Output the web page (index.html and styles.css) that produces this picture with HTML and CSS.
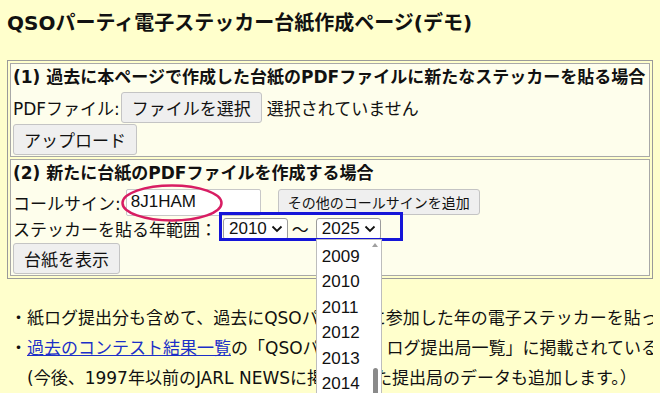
FILE: index.html
```html
<!DOCTYPE html>
<html lang="ja">
  <head>
    <meta charset="utf-8">
    <title>QSOパーティ電子ステッカー台紙作成ページ(デモ)</title>
    <link rel="stylesheet" href="styles.css">
  </head>
  <body>
    <h1 class="title">QSOパーティ電子ステッカー台紙作成ページ(デモ)</h1>

    <table class="form-table">
      <tr>
        <td>
          <div class="sec-head">(1) 過去に本ページで作成した台紙のPDFファイルに新たなステッカーを貼る場合</div>
          <div class="line line-file">
            <span>PDFファイル:</span>
            <span class="btn">ファイルを選択</span>
            <span>選択されていません</span>
          </div>
          <div class="line line-upload">
            <span class="btn">アップロード</span>
          </div>
        </td>
      </tr>
      <tr>
        <td>
          <div class="sec-head">(2) 新たに台紙のPDFファイルを作成する場合</div>
          <div class="line line-call">
            <span>コールサイン:</span>
            <span class="call-wrap">
              <span class="text-input">8J1HAM</span>
              <svg class="mark-ellipse" width="104" height="40" viewBox="0 0 104 40">
                <ellipse cx="52" cy="20" rx="49.5" ry="17.5" fill="none" stroke="#d81d63" stroke-width="2.5"/>
              </svg>
            </span>
            <span class="btn btn-small">その他のコールサインを追加</span>
          </div>
          <div class="line line-year">
            <span>ステッカーを貼る年範囲：</span>
            <span class="year-range">
              <span class="select">2010<svg class="chev" width="12" height="8" viewBox="0 0 12 8"><path d="M1.5 1.5 L6 6 L10.5 1.5" fill="none" stroke="#111" stroke-width="1.8"/></svg></span>
              <span class="tilde">～</span>
              <span class="select select-open">2025<svg class="chev" width="12" height="8" viewBox="0 0 12 8"><path d="M1.5 1.5 L6 6 L10.5 1.5" fill="none" stroke="#111" stroke-width="1.8"/></svg>
                <span class="dropdown">
                  <span class="opt">2009</span>
                  <span class="opt">2010</span>
                  <span class="opt">2011</span>
                  <span class="opt">2012</span>
                  <span class="opt">2013</span>
                  <span class="opt">2014</span>
                  <span class="scroll-up"></span>
                  <span class="scroll-thumb"></span>
                </span>
              </span>
              <span class="mark-box"></span>
            </span>
          </div>
          <div class="line line-show">
            <span class="btn">台紙を表示</span>
          </div>
        </td>
      </tr>
    </table>

    <div class="notes">
      <p>・紙ログ提出分も含めて、過去にQSOパーティに参加した年の電子ステッカーを貼った台紙を作成できます。</p>
      <p>・<a href="#">過去のコンテスト結果一覧</a>の「QSOパーティ・ログ提出局一覧」に掲載されている年のステッカーが貼られます。</p>
      <p class="indent">(今後、1997年以前のJARL NEWSに掲載された提出局のデータも追加します。）</p>
    </div>
  </body>
</html>
```

FILE: styles.css
```css
body {
    margin: 0 7px;
    background: #ffffcc;
    font-family: "DejaVu Sans", "Noto Sans CJK JP", sans-serif;
    font-size: 17px;
    color: #111;
    overflow: hidden;
}
.title {
    font-size: 20px;
    font-weight: bold;
    margin: 0;
    padding-top: 9px;
    line-height: 28px;
    height: 51px;
}
/* classic bordered table */
.form-table {
    width: 646px;
    border: 1px solid #9a9a9a;
    border-spacing: 2px;
    background: #ffffcc;
}
.form-table td {
    border: 1px solid #a8a8a8;
    background: #fefeec;
    padding: 1px 1px 1px 2px;
}
.sec-head {
    font-weight: bold;
    line-height: 25px;
}
.line {
    display: flex;
    align-items: center;
    white-space: nowrap;
}
.line-file {
    margin-top: 2px;
    gap: 1px;
}
.line-file .btn {
    margin-right: 4px;
}
.line-upload {
    margin-top: 1px;
}
.btn {
    display: inline-flex;
    align-items: center;
    height: 31px;
    box-sizing: border-box;
    padding: 0 10px;
    background: #efefef;
    border: 1px solid #c4c4c4;
    border-radius: 3px;
    font-family: "Noto Sans CJK JP", sans-serif;
    font-size: 17px;
}
.btn-small {
    height: 26px;
    font-size: 14px;
    padding: 0 9px;
    margin-left: 17px;
}
.line-call {
    margin-top: 2px;
    height: 28px;
}
.call-wrap {
    position: relative;
    margin-left: 5px;
}
.text-input {
    display: flex;
    align-items: center;
    width: 135px;
    height: 27px;
    box-sizing: border-box;
    padding-left: 4px;
    background: #fff;
    border: 1px solid #c8c8c8;
    border-radius: 2px;
    font-family: "Liberation Sans", Arial, sans-serif;
    font-size: 17px;
}
.mark-ellipse {
    position: absolute;
    left: -6px;
    top: -6px;
}
.line-year {
    height: 25px;
}
.year-range {
    position: relative;
    display: flex;
    align-items: center;
    margin-left: 6px;
}
.select {
    position: relative;
    display: inline-flex;
    align-items: center;
    height: 22px;
    box-sizing: border-box;
    padding: 0 4px 0 5px;
    background: #fff;
    border: 1px solid #9c9c9c;
    border-radius: 3px;
    font-family: "Liberation Sans", Arial, sans-serif;
    font-size: 17px;
}
.chev {
    margin-left: 4px;
}
.tilde {
    margin: 0 7px 0 4px;
    font-family: "Noto Sans CJK JP", sans-serif;
}
.dropdown {
    position: absolute;
    left: -1px;
    top: 20px;
    width: 66px;
    height: 170px;
    box-sizing: border-box;
    padding-top: 4px;
    background: #fff;
    border: 1px solid #bdbdbd;
    z-index: 2;
}
.opt {
    display: block;
    height: 25.6px;
    line-height: 25.6px;
    padding-left: 5px;
}
.scroll-up {
    position: absolute;
    right: 3px;
    top: 3px;
    width: 0;
    height: 0;
    border-left: 3px solid transparent;
    border-right: 3px solid transparent;
    border-bottom: 4px solid #a0a0a0;
}
.scroll-thumb {
    position: absolute;
    right: 3px;
    top: 128px;
    width: 5px;
    height: 60px;
    border-radius: 3px;
    background: #8a8a8a;
}
.mark-box {
    position: absolute;
    left: -4px;
    top: -4px;
    width: 184px;
    height: 29px;
    border: 3px solid #1515d8;
    box-sizing: border-box;
    pointer-events: none;
    z-index: 1;
}
.line-show {
    margin-top: 2px;
}
.notes {
    margin-top: 24px;
    white-space: nowrap;
}
.notes p {
    margin: 0;
    line-height: 30px;
    padding-left: 3px;
}
.notes .indent {
    padding-left: 20px;
}
.notes a {
    color: #1c2fc8;
}
```
